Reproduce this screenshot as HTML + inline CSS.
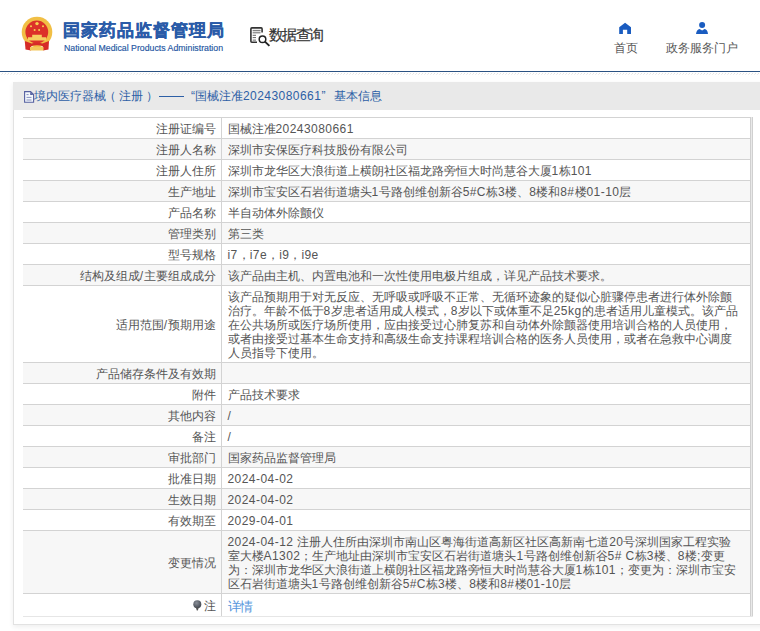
<!DOCTYPE html>
<html><head><meta charset="utf-8">
<style>
*{box-sizing:border-box}
html,body{margin:0;padding:0;width:760px;height:631px;overflow:hidden;background:#fff;font-family:"Liberation Sans",sans-serif;}
.hdr{position:absolute;left:0;top:0;width:760px;height:71px;background:#fff}
.emb{position:absolute;left:20px;top:16px}
.t1{position:absolute;left:63px;top:18px;font-size:17px;letter-spacing:0.95px;font-weight:bold;color:#2a5ba8;-webkit-text-stroke:0.35px #2a5ba8;white-space:nowrap;line-height:26px}
.t2{position:absolute;left:64px;top:41.5px;font-size:8.75px;color:#2455a2;white-space:nowrap;line-height:12px;-webkit-text-stroke:0.15px #2455a2}
.q{position:absolute;left:249px;top:26px}
.qt{position:absolute;left:269px;top:25px;font-size:14.5px;letter-spacing:-1.6px;color:#333;-webkit-text-stroke:0.2px #333;white-space:nowrap;line-height:20px}
.nav{position:absolute;font-size:12px;color:#555;white-space:nowrap;line-height:16px;font-weight:300}
.line{position:absolute;left:0;top:71px;width:760px;height:1px;background:#2b5283}
.hatch{position:absolute;left:0;top:73px;width:760px;height:1px;background:linear-gradient(90deg,#fff 0 2px,#e4e4e4 2px 3px);background-size:3px 1px}
.hatch2{position:absolute;left:0;top:74px;width:760px;height:1px;background:linear-gradient(90deg,#fff 0 1px,#eeeeee 1px 2px,#fff 2px 3px);background-size:3px 1px}
.panel{position:absolute;left:13px;top:82px;width:760px;height:543px;background:#fff;border:1px solid #e2e2e2;box-shadow:0 2px 5px rgba(0,0,0,.07)}
.ph{position:absolute;left:-1px;top:-1px;width:100%;height:28px;background:#e9e9e9}
.pht{position:absolute;left:20px;top:6px;font-size:12px;color:#2d5fa6;white-space:nowrap;line-height:16px;font-weight:400}
.doc{position:absolute;left:11px;top:9px}
table{position:absolute;left:23px;top:117px;width:730px;border-collapse:collapse;font-size:12px;color:#555;font-weight:300}
.n{letter-spacing:0.45px;font-weight:400}
td{border:1px solid #d3d3d3;padding:4px 7px 2px 6px;line-height:14px;white-space:nowrap;vertical-align:middle}
td.l{text-align:right;width:198px;padding-right:5px;border-left:none}
tr:nth-child(even) td{background:#f7f7f7}
tr:last-child td{border-bottom-color:#e6e6e6}
a{color:#5595dc;text-decoration:none}
</style></head><body>
<div class="hdr">
 <svg style="position:absolute;left:0;top:0" width="60" height="60" viewBox="0 0 60 60">
  <circle cx="37" cy="32" r="15.3" fill="#f1bf45"/>
  <circle cx="36.8" cy="32" r="11.4" fill="#dc3129"/>
  <path d="M28 40.5 L46 40.5 L46 37.2 L41.8 37.2 L41.8 34.8 L32.2 34.8 L32.2 37.2 L28 37.2 Z" fill="#f5cf60"/>
  <path d="M24.8 41 L31.5 43.5 L31 50.5 L25.5 49.5 Z" fill="#d62b27"/>
  <path d="M49 41 L42.5 43.5 L43 50.5 L48.5 49.5 Z" fill="#d62b27"/>
  <path d="M30 44 Q37 41.5 44 44 L44 46.5 Q37 44 30 46.5 Z" fill="#d62b27"/>
  <rect x="30" y="47" width="13.5" height="3.5" fill="#f3c85a"/>
  <circle cx="37" cy="23.6" r="1.7" fill="#f7d250"/>
  <circle cx="31" cy="26.3" r="1" fill="#f7d250"/>
  <circle cx="43" cy="26.3" r="1" fill="#f7d250"/>
  <circle cx="34.6" cy="30" r="1" fill="#f7d250"/>
  <circle cx="39.1" cy="30" r="1" fill="#f7d250"/>
 </svg>
 <div class="t1">国家药品监督管理局</div>
 <div class="t2">National Medical Products Administration</div>
 <svg class="q" width="24" height="24" viewBox="0 0 24 24">
  <path d="M8 16.3 H2.9 Q1.9 16.3 1.9 15.3 V2.9 Q1.9 1.9 2.9 1.9 H12.1 Q13.1 1.9 13.1 2.9 V6.6" stroke="#333" stroke-width="1.6" fill="none"/>
  <rect x="3.7" y="3.9" width="7.8" height="3.4" fill="#ddd"/>
  <path d="M3.7 4.4H11.5M3.7 6.8H11.5" stroke="#777" stroke-width="1"/>
  <path d="M3.7 9.3H7M3.7 11.6H7M3.7 14.1H7" stroke="#666" stroke-width="1"/>
  <circle cx="13.5" cy="13.2" r="3.3" stroke="#222" stroke-width="1.5" fill="none"/>
  <path d="M15.9 15.6 L20.4 19.9" stroke="#222" stroke-width="1.9"/>
 </svg>
 <div class="qt">数据查询</div>
 <svg style="position:absolute;left:619px;top:22px" width="13" height="13" viewBox="0 0 13 13">
  <path d="M6.1 0.7 L12 5.3 L12 12 L8.2 12 L8.2 7.7 L3.9 7.7 L3.9 12 L0.2 12 L0.2 5.3 Z" fill="#1a5cc0"/>
 </svg>
 <div class="nav" style="left:614px;top:40px">首页</div>
 <svg style="position:absolute;left:696px;top:22px" width="13" height="13" viewBox="0 0 13 13">
  <circle cx="6.1" cy="3.1" r="3" fill="#1a5cc0"/>
  <path d="M0 12 Q0.6 7.6 3.6 7 L6.1 8.6 L8.6 7 Q11.6 7.6 12 12 Z" fill="#1a5cc0"/>
 </svg>
 <div class="nav" style="left:666px;top:40px">政务服务门户</div>
</div>
<div class="line"></div>
<div class="hatch"></div><div class="hatch2"></div>
<div class="panel">
 <div class="ph">
  <svg class="doc" width="11" height="12" viewBox="0 0 11 12"><path d="M0.6 0.6H6.6L9.6 3.6V11.2H0.6Z" stroke="#5560a0" stroke-width="1.1" fill="#f4f8fc"/><path d="M6.2 0.8V4H9.4Z" fill="#5560a0"/><path d="M2.5 3.6H4.6M2.5 6.4H7.5M2.5 9H7.5" stroke="#7a84b8" stroke-width="0.9"/></svg>
  <span class="pht" style="left:21px">境内医疗器械</span>
  <span class="pht" style="left:91px">（</span>
  <span class="pht" style="left:106px">注册</span>
  <span class="pht" style="left:133px">）</span>
  <div style="position:absolute;left:146px;top:14px;width:25px;height:1px;background:#2d5fa6"></div>
  <span class="pht" style="left:178px">“国械注准<span class="n">20243080661</span>”</span>
  <span class="pht" style="left:321px">基本信息</span>
 </div>
</div>
<table>
<tr><td class="l">注册证编号</td><td>国械注准<span class="n">20243080661</span></td></tr>
<tr><td class="l">注册人名称</td><td>深圳市安保医疗科技股份有限公司</td></tr>
<tr><td class="l">注册人住所</td><td>深圳市龙华区大浪街道上横朗社区福龙路旁恒大时尚慧谷大厦<span class="n">1</span>栋<span class="n">101</span></td></tr>
<tr><td class="l">生产地址</td><td>深圳市宝安区石岩街道塘头<span class="n">1</span>号路创维创新谷<span class="n">5#C</span>栋<span class="n">3</span>楼、<span class="n">8</span>楼和<span class="n">8#</span>楼<span class="n">01-10</span>层</td></tr>
<tr><td class="l">产品名称</td><td>半自动体外除颤仪</td></tr>
<tr><td class="l">管理类别</td><td>第三类</td></tr>
<tr><td class="l">型号规格</td><td><span class="n">i7</span>，<span class="n">i7e</span>，<span class="n">i9</span>，<span class="n">i9e</span></td></tr>
<tr><td class="l">结构及组成<span class="n">/</span>主要组成成分</td><td>该产品由主机、内置电池和一次性使用电极片组成，详见产品技术要求。</td></tr>
<tr><td class="l">适用范围<span class="n">/</span>预期用途</td><td>该产品预期用于对无反应、无呼吸或呼吸不正常、无循环迹象的疑似心脏骤停患者进行体外除颤<br>治疗。年龄不低于<span class="n">8</span>岁患者适用成人模式，<span class="n">8</span>岁以下或体重不足<span class="n">25kg</span>的患者适用儿童模式。该产品<br>在公共场所或医疗场所使用，应由接受过心肺复苏和自动体外除颤器使用培训合格的人员使用，<br>或者由接受过基本生命支持和高级生命支持课程培训合格的医务人员使用，或者在急救中心调度<br>人员指导下使用。</td></tr>
<tr><td class="l">产品储存条件及有效期</td><td></td></tr>
<tr><td class="l">附件</td><td>产品技术要求</td></tr>
<tr><td class="l">其他内容</td><td><span class="n">/</span></td></tr>
<tr><td class="l">备注</td><td><span class="n">/</span></td></tr>
<tr><td class="l">审批部门</td><td>国家药品监督管理局</td></tr>
<tr><td class="l">批准日期</td><td><span class="n">2024-04-02</span></td></tr>
<tr><td class="l">生效日期</td><td><span class="n">2024-04-02</span></td></tr>
<tr><td class="l">有效期至</td><td><span class="n">2029-04-01</span></td></tr>
<tr><td class="l">变更情况</td><td><span class="n">2024-04-12 </span>注册人住所由深圳市南山区粤海街道高新区社区高新南七道<span class="n">20</span>号深圳国家工程实验<br>室大楼<span class="n">A1302</span>；生产地址由深圳市宝安区石岩街道塘头<span class="n">1</span>号路创维创新谷<span class="n">5# C</span>栋<span class="n">3</span>楼、<span class="n">8</span>楼<span class="n">;</span>变更<br>为：深圳市龙华区大浪街道上横朗社区福龙路旁恒大时尚慧谷大厦<span class="n">1</span>栋<span class="n">101</span>；变更为：深圳市宝安<br>区石岩街道塘头<span class="n">1</span>号路创维创新谷<span class="n">5#C</span>栋<span class="n">3</span>楼、<span class="n">8</span>楼和<span class="n">8#</span>楼<span class="n">01-10</span>层</td></tr>
<tr><td class="l"><svg style="display:inline-block;vertical-align:-1px;margin-right:2px" width="9" height="11" viewBox="0 0 9 11"><defs><radialGradient id="g" cx="0.4" cy="0.35" r="0.7"><stop offset="0" stop-color="#8a8f98"/><stop offset="1" stop-color="#3e434c"/></radialGradient></defs><circle cx="4.3" cy="4.2" r="4" fill="url(#g)"/><path d="M2.8 7.6H5.8L4.8 10.4H3.8Z" fill="#555"/></svg>注</td><td style="padding-top:6px;padding-bottom:2px"><a style="font-size:13px;letter-spacing:-0.5px">详情</a></td></tr>
</table>
<div style="position:absolute;left:750px;top:117px;width:3px;height:499px;border-left:1px solid #d0d0d0;border-right:1px solid #d0d0d0;background:#e9e9e9"></div>
</body></html>
